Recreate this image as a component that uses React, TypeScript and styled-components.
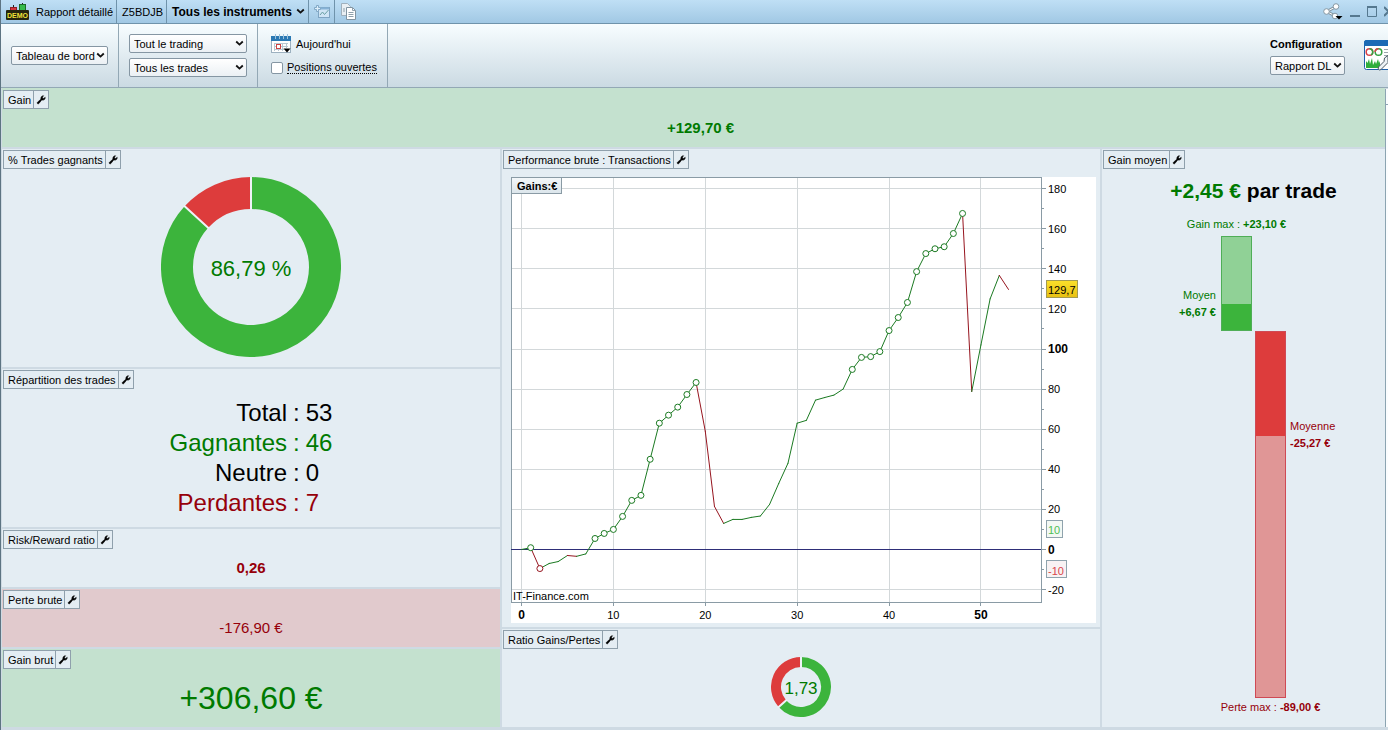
import React, { useLayoutEffect, useRef, useState } from "react";
import styled, { createGlobalStyle, css } from "styled-components";

const color = {
  panel: "#e4edf3",
  gainBg: "#c4e1cf",
  lossBg: "#e1cacd",
  divider: "#cedae3",
  line: "#8fa0ac",
  frame: "#5d7482",
  gain: "#3cb43c",
  gainSoft: "#90d196",
  gainText: "#007a00",
  loss: "#dd3c3c",
  lossSoft: "#e09696",
  lossText: "#96000a",
};

const GlobalStyle = createGlobalStyle`
  * { box-sizing: border-box; }
  body {
    margin: 0;
    font: 11px/16px "Liberation Sans", Arial, sans-serif;
    color: #000;
    background: ${color.divider};
  }
  button, select, input { font: inherit; color: inherit; }
  svg { display: block; flex: none; }
`;

const Page = styled.div`
  display: flex;
  flex-direction: column;
  min-height: 100vh;
  overflow: hidden;
  border-left: 1px solid ${color.frame};
`;

/* ---- title bar ---- */

const TitleBar = styled.header`
  display: flex;
  height: 24px;
  background: linear-gradient(#bfdff5, #a1c8e4);
  border-bottom: 1px solid #6f93ab;
`;

const TitleCell = styled.div<{ $last?: boolean }>`
  display: flex;
  align-items: center;
  gap: 7px;
  padding: 0 3px 0 5px;
  white-space: nowrap;
  border-right: ${(p) => (p.$last ? 0 : 1)}px solid #6f93ab;
`;

const PlainButton = styled.button<{ $bold?: boolean }>`
  display: flex;
  align-items: center;
  gap: 4px;
  padding: 0;
  border: 0;
  background: none;
  font-size: ${(p) => (p.$bold ? 12 : 11)}px;
  font-weight: ${(p) => (p.$bold ? 700 : 400)};
`;

const WindowControls = styled.div`
  display: flex;
  align-items: center;
  gap: 7px;
  margin-left: auto;
`;

/* ---- toolbar ---- */

const Toolbar = styled.div`
  display: flex;
  height: 64px;
  background: linear-gradient(#f7fdff, #cbdae3);
  border-bottom: 1px solid #93a8b5;
`;

const ToolGroup = styled.div`
  display: flex;
  flex-direction: column;
  justify-content: center;
  gap: 5px;
  padding: 0 10px;
  border-right: 1px solid #93a8b5;
`;

const ToolLine = styled.div`
  display: flex;
  align-items: center;
  gap: 4px;
  height: 19px;
  padding-left: 3px;
`;

const ToolEnd = styled.div`
  display: flex;
  align-items: center;
  gap: 19px;
  margin-left: auto;
`;

const ConfigField = styled.div`
  display: flex;
  flex-direction: column;
  gap: 4px;
`;

const FieldLabel = styled.label`
  font-weight: 700;
`;

const SelectShell = styled.div<{ $width: number }>`
  position: relative;
  width: ${(p) => p.$width}px;
  height: 19px;

  svg {
    position: absolute;
    right: 3px;
    top: 6px;
    pointer-events: none;
  }
`;

const SelectBox = styled.select`
  appearance: none;
  display: block;
  width: 100%;
  height: 19px;
  padding: 0 0 0 4px;
  border: 1px solid #8596a3;
  border-radius: 2px;
  background: linear-gradient(#fff, #ebf0f4);
`;

const Tick = styled.input`
  appearance: none;
  width: 12px;
  height: 12px;
  margin: 0;
  border: 1px solid #8596a3;
  border-radius: 2px;
  background: #fff;
`;

const TickLabel = styled.label`
  line-height: 12px;
  border-bottom: 1px dotted #000;
`;

/* ---- dashboard ---- */

const Content = styled.main`
  display: flex;
  flex: 1;
  padding: 0 0 3px 1px;
`;

const Dashboard = styled.div`
  display: flex;
  flex-direction: column;
  flex: 1;
  gap: 2px;
  min-width: 0;
`;

const Columns = styled.div`
  display: grid;
  grid-template-columns: 498fr 598fr 283fr;
  gap: 2px;
  flex: 1;
`;

const Column = styled.div`
  display: flex;
  flex-direction: column;
  gap: 2px;
  min-width: 0;
`;

const PanelBox = styled.section<{ $bg: string; $height: number; $grow?: boolean; $top: number }>`
  display: flex;
  flex-direction: column;
  align-items: flex-start;
  flex: ${(p) => (p.$grow ? "1 0 auto" : "none")};
  min-height: ${(p) => p.$height}px;
  padding: ${(p) => p.$top}px 1px 0;
  background: ${(p) => p.$bg};
`;

const Chip = styled.div`
  display: flex;
  height: 19px;
  border: 1px solid ${color.line};
  background: ${color.panel};
`;

const ChipTitle = styled.h2`
  margin: 0;
  padding: 0 2px 0 4px;
  font: inherit;
  line-height: 18px;
  white-space: nowrap;
`;

const ChipButton = styled.button`
  display: flex;
  align-items: center;
  justify-content: center;
  width: 15px;
  padding: 0;
  border: 0;
  border-left: 1px solid ${color.line};
  background: none;
`;

const PanelBody = styled.div<{ $shift?: number; $fromTop?: boolean }>`
  display: flex;
  flex-direction: column;
  align-items: center;
  justify-content: ${(p) => (p.$fromTop ? "flex-start" : "center")};
  align-self: stretch;
  flex: 1;
  padding-left: ${(p) => p.$shift ?? 0}px;
`;

const Figure = styled.div<{ $size: number; $tone: "gain" | "loss"; $bold?: boolean }>`
  font-size: ${(p) => p.$size}px;
  line-height: 38px;
  font-weight: ${(p) => (p.$bold ? 700 : 400)};
  color: ${(p) => (p.$tone === "gain" ? color.gainText : color.lossText)};
`;

const DonutBox = styled.div`
  padding-bottom: 2px;
`;

const Breakdown = styled.dl`
  display: grid;
  grid-template-columns: auto auto auto;
  column-gap: 6px;
  margin: 0;
  font-size: 24px;
  line-height: 30px;
`;

const toned = css<{ $ink: string }>`
  margin: 0;
  color: ${(p) => p.$ink};
`;
const BreakdownName = styled.dt`
  ${toned}
  text-align: right;
`;
const BreakdownPart = styled.dd`
  ${toned}
`;

const ChartArea = styled.div`
  align-self: stretch;
  margin: 8px 3px 4px 8px;
`;

const AverageTitle = styled.h3`
  margin: 0;
  font-size: 21px;
  line-height: 44px;
  white-space: nowrap;

  span { color: ${color.gainText}; }
`;

const BarGrid = styled.div`
  display: grid;
  grid-template-columns: 1fr 31px 31px 1fr;
  column-gap: 3px;
  align-self: stretch;
`;

const BarCaption = styled.div<{ $col: number; $row: number; $tone: "gain" | "loss" }>`
  grid-area: ${(p) => p.$row} / ${(p) => p.$col};
  display: flex;
  justify-content: center;
  gap: 3px;
  line-height: ${(p) => (p.$tone === "gain" ? 23 : 19)}px;
  white-space: nowrap;
  color: ${(p) => (p.$tone === "gain" ? color.gainText : color.lossText)};
`;

const Bar = styled.div<{ $col: number; $row: number; $soft: string; $edge: string; $end?: boolean }>`
  grid-area: ${(p) => p.$row} / ${(p) => p.$col};
  display: flex;
  flex-direction: column;
  justify-content: ${(p) => (p.$end ? "flex-end" : "flex-start")};
  border: 1px solid ${(p) => p.$edge};
  background: ${(p) => p.$soft};
`;

const BarFill = styled.div<{ $fill: string }>`
  background: ${(p) => p.$fill};
`;

const BarLabel = styled.div<{ $col: number; $row: number; $ink: string }>`
  grid-area: ${(p) => p.$row} / ${(p) => p.$col};
  height: 34px;
  padding: 0 2px 0 1px;
  line-height: 17px;
  text-align: ${(p) => (p.$col === 1 ? "right" : "left")};
  color: ${(p) => p.$ink};

  strong { display: block; }
`;

const ScrollEdge = styled.div`
  flex: none;
  width: 3px;
  margin-top: 1px;
  border-left: 1px solid #8ca4b1;
  background: #fbfdfe;

  &::before {
    content: "";
    display: block;
    height: 15px;
    border-bottom: 1px solid #8ca4b1;
  }
`;

/* ---- icons ---- */

const Chevron = () => (
  <svg width="9" height="7" viewBox="0 0 9 7" aria-hidden="true">
    <path d="M1.2 1.5 4.5 4.6 7.8 1.5" fill="none" stroke="#111" strokeWidth="1.8" />
  </svg>
);

const Wrench = () => (
  <svg width="10" height="10" viewBox="0 0 10 10" aria-hidden="true">
    <path
      d="M7.600.8 6.400 2l.2 1.300 1.300.2L9.200 2.300c.2 1.500-.9 2.900-2.400 2.800-.4 0-.8-.1-1.100-.2L2.900 8.500C2 9.500.6 8.200 1.500 7.200L4.900 4.200C4.500 2.500 5.800.5 7.600.8Z"
      fill="#000"
      stroke="#000"
      strokeWidth=".6"
    />
  </svg>
);

const DemoLogo = () => (
  <svg width="23" height="18" viewBox="0 0 23 18" aria-hidden="true">
    <path d="M7.500 2v6M16.500 0v8" stroke="#222" />
    <rect x="4.500" y="4.500" width="6" height="4" fill="#d3343d" stroke="#8c2027" />
    <rect x="13.500" y="1.500" width="6" height="7" fill="#35bb4a" stroke="#1a6b28" />
    <rect x="0" y="7" width="23" height="10" rx="1" fill="#25250e" />
    <text x="11.500" y="15" textAnchor="middle" fontSize="7" fontWeight="700" fill="#f0e339">
      DEMO
    </text>
  </svg>
);

const AddChartIcon = () => (
  <svg width="17" height="14" viewBox="0 0 17 14" aria-hidden="true">
    <rect x="4.500" y="2.500" width="11" height="10" fill="#cfe5f5" stroke="#7fa5c3" />
    <path d="M5 3.500h10" stroke="#86b2d6" strokeWidth="2" />
    <path d="m6 10 2.500-3 2 2.500L14.500 5" fill="none" stroke="#6ba1a5" />
    <path d="M2.500.500h2v2h2v2h-2v2h-2v-2h-2v-2h2z" fill="#dceefa" stroke="#82a9c6" />
  </svg>
);

const CopyIcon = () => (
  <svg width="17" height="17" viewBox="0 0 17 17" aria-hidden="true">
    <path d="M1.500.500h6l3 3v9h-9z" fill="#e9eff3" stroke="#a0b0bc" />
    <path d="M6.500 4.500h6l3 3v9h-9z" fill="#fff" stroke="#8194a1" />
    <path d="M12.500 4.500v3h3M8.500 9.500h5M8.500 11.500h5M8.500 13.500h5M3 6h2M3 8h2" fill="none" stroke="#8fa0ab" />
  </svg>
);

const ShareIcon = () => (
  <svg width="20" height="17" viewBox="0 0 20 17" aria-hidden="true">
    <path d="M13 3.500 4 8.500l9 5" fill="none" stroke="#8698a4" strokeWidth="3" />
    <path d="M13 3.500 4 8.500l9 5" fill="none" stroke="#fff" strokeWidth="1" />
    <g fill="#fff" stroke="#8698a4">
      <circle cx="13" cy="3.500" r="2.800" />
      <circle cx="3.500" cy="8.500" r="2.800" />
      <circle cx="12" cy="13" r="2.800" />
    </g>
    <path d="M12.500 13h7L16 16.500z" fill="#000" />
  </svg>
);

const CalendarIcon = () => (
  <svg width="21" height="20" viewBox="0 0 21 20" aria-hidden="true">
    <rect x=".5" y="2.500" width="19" height="16" fill="#fff" stroke="#9db1c0" />
    <rect x="0" y="2" width="20" height="5" fill="#2a78b3" />
    <path d="M4.500 0v5M8.500 0v5M12.500 0v5M16.500 0v5" stroke="#9fc4dd" />
    <path d="M3 9.500h14M3 12.500h14M3 15.500h10M3.500 9v8M7.500 9v8M11.500 9v8M15.500 9v5" stroke="#b9c7d1" />
    <rect x="5.500" y="10.500" width="4" height="4" fill="#fff" stroke="#cf4444" />
    <path d="M12.500 14.500h7L16 18.500z" fill="#000" />
  </svg>
);

const ReportIcon = () => (
  <svg width="24" height="31" viewBox="0 0 24 31" aria-hidden="true">
    <path d="M24 .5H2.500Q.5.5.5 2.500v25q0 2 2 2H24" fill="#fff" stroke="#1f5fa8" />
    <path d="M24 0H2.500Q0 0 0 2.500V6h24z" fill="#1b6ab5" />
    <circle cx="5.500" cy="12" r="3.300" fill="none" stroke="#d8434a" strokeWidth="1.500" />
    <path d="M5.500 8.700a3.300 3.300 0 0 1 1.500 6.200" fill="none" stroke="#35a342" strokeWidth="1.500" />
    <circle cx="14.500" cy="12" r="3.300" fill="none" stroke="#35a342" strokeWidth="1.500" />
    <path d="M14.500 8.700a3.300 3.300 0 0 0-3.300 3.300" fill="none" stroke="#d8434a" strokeWidth="1.500" />
    <path d="M20 9.500h4M20 12.500h4M20 15.500h4" stroke="#9aa5ad" />
    <path d="M2 28v-7l1.500 2L5 19l1 5 2-6 1 7 2-4 1 3 2-5 1 4 1-2v7z" fill="#2fae3c" />
    <path d="M14.500 29.500q-1-1.500.5-3l5-5q-1-4 4-6v7l-7 7q-1.500 1-2.500 0z" fill="#eef2f5" stroke="#4a5963" />
  </svg>
);

const Minimise = () => (
  <svg width="10" height="11" viewBox="0 0 10 11" aria-hidden="true">
    <path d="M0 10h10" stroke="#55788f" strokeWidth="2" />
  </svg>
);
const Maximise = () => (
  <svg width="10" height="11" viewBox="0 0 10 11" aria-hidden="true">
    <path d="M.5 1h9v9.500h-9z" fill="none" stroke="#55788f" />
    <path d="M0 1h10" stroke="#55788f" strokeWidth="2" />
  </svg>
);
const CloseMark = () => (
  <svg width="4" height="11" viewBox="0 0 4 11" aria-hidden="true">
    <path d="m0 1 4.500 4.500L0 10" fill="none" stroke="#55788f" strokeWidth="2" />
  </svg>
);

/* ---- building blocks ---- */

function Dropdown({ id, width, text }: { id: string; width: number; text: string }) {
  return (
    <SelectShell $width={width}>
      <SelectBox id={id} aria-label={text}>
        <option>{text}</option>
      </SelectBox>
      <Chevron />
    </SelectShell>
  );
}

type PanelProps = {
  title: string;
  height: number;
  bg?: string;
  grow?: boolean;
  top?: number;
  shift?: number;
  fromTop?: boolean;
  children: React.ReactNode;
};

function Panel({ title, height, bg = color.panel, grow, top = 1, shift, fromTop, children }: PanelProps) {
  return (
    <PanelBox $bg={bg} $height={height} $grow={grow} $top={top}>
      <Chip>
        <ChipTitle>{title}</ChipTitle>
        <ChipButton aria-label={`Configurer ${title}`}>
          <Wrench />
        </ChipButton>
      </Chip>
      <PanelBody $shift={shift} $fromTop={fromTop}>{children}</PanelBody>
    </PanelBox>
  );
}

type DonutProps = { share: number; radius: number; hole: number; label: string; fontSize: number };

function Donut({ share, radius, hole, label, fontSize }: DonutProps) {
  const mid = (radius + hole) / 2;
  const at = (part: number, r: number) => {
    const a = part * Math.PI * 2;
    return `${radius + r * Math.sin(a)} ${radius - r * Math.cos(a)}`;
  };
  const arc = (from: number, to: number) =>
    `M${at(from, mid)}A${mid} ${mid} 0 ${to - from > 0.5 ? 1 : 0} 1 ${at(to, mid)}`;
  return (
    <DonutBox>
      <svg width={radius * 2} height={radius * 2} role="img" aria-label={label}>
        <g fill="none" strokeWidth={radius - hole}>
          <path d={arc(share, 1)} stroke={color.loss} />
          <path d={arc(0, share)} stroke={color.gain} />
        </g>
        <path
          d={`M${at(0, hole - 1)}L${at(0, radius + 1)}M${at(share, hole - 1)}L${at(share, radius + 1)}`}
          stroke="#eef3f7"
          strokeWidth="2"
        />
        <text
          x={radius}
          y={radius + Math.round(fontSize * 0.38) + 1}
          textAnchor="middle"
          fontSize={fontSize}
          fill={color.gainText}
        >
          {label}
        </text>
      </svg>
    </DonutBox>
  );
}

/* Running total in euros after each trade. */
const equity = [
  0, 0.9, -9.5, -7, -6, -3, -3.4, -2.2, 5.5, 8, 10, 16.5, 24.5, 27, 45, 63, 67, 71, 77.3, 83.3, 59, 21.5,
  13, 15, 15, 16, 16.7, 22.5, 33, 43, 63, 64.4, 74.5, 75.8, 77, 80, 89.8, 95.8, 96.2, 98.7, 109.2, 115.7,
  123.2, 138.6, 147.6, 150, 151, 157.6, 167.6, 78.8, 102, 125, 136.7, 129.7,
];
const marked = (i: number) => i === 1 || i === 2 || (i >= 8 && i <= 19) || (i >= 36 && i <= 48);

function EquityChart() {
  const box = useRef<HTMLDivElement>(null);
  const [width, setWidth] = useState(585);
  useLayoutEffect(() => {
    const el = box.current;
    if (!el) return;
    const measure = () => setWidth(Math.round(el.getBoundingClientRect().width));
    measure();
    const watcher = new ResizeObserver(measure);
    watcher.observe(el);
    return () => watcher.disconnect();
  }, []);

  const height = 446;
  const bottom = 425;
  const right = width - 55;
  const x = (i: number) => 10.5 + (i * (right - 43)) / 53;
  const y = (v: number) => 372.5 - v * 2.005;
  const snap = (n: number) => Math.floor(n) + 0.5;
  const ink = (i: number) => (equity[i] < equity[i - 1] ? "#96141e" : "#1b7a22");
  const levels = Array.from({ length: 21 }, (_, i) => i * 10 - 20);

  return (
    <ChartArea ref={box}>
      <svg width={width} height={height} role="img" aria-label="Performance brute">
        <defs>
          <linearGradient id="legend" x2="0" y2="1">
            <stop offset="0" stopColor="#f4f8fa" />
            <stop offset="1" stopColor="#dbe5eb" />
          </linearGradient>
          <linearGradient id="current" x2="0" y2="1">
            <stop offset="0" stopColor="#fbe02a" />
            <stop offset="1" stopColor="#e8c013" />
          </linearGradient>
        </defs>
        <rect width={width} height={height} fill="#fff" />
        <g stroke="#d3d8da" shapeRendering="crispEdges">
          {levels.filter((v) => v % 20 === 0).map((v) => (
            <line key={v} x1="0" x2={right} y1={snap(y(v))} y2={snap(y(v))} />
          ))}
          {[0, 10, 20, 30, 40, 50].map((n) => (
            <line key={n} y1="0" y2={bottom} x1={snap(x(n))} x2={snap(x(n))} />
          ))}
        </g>
        <g stroke="#8a9ba5" shapeRendering="crispEdges" fill="none">
          <rect x=".5" y=".5" width={right} height={bottom} />
          {levels.map((v) => (
            <line key={v} x1={right} x2={right + (v % 20 ? 3 : 5)} y1={snap(y(v))} y2={snap(y(v))} />
          ))}
          {[0, 10, 20, 30, 40, 50].map((n) => (
            <line key={n} y1={bottom} y2={bottom + 4} x1={snap(x(n))} x2={snap(x(n))} />
          ))}
        </g>
        <line x1="0" x2={right} y1="372.5" y2="372.5" stroke="#2e2e78" shapeRendering="crispEdges" />
        {equity.slice(1).map((v, k) => (
          <line key={k} x1={x(k)} y1={y(equity[k])} x2={x(k + 1)} y2={y(v)} stroke={ink(k + 1)} strokeLinecap="round" />
        ))}
        {equity.map((v, i) =>
          marked(i) ? <circle key={i} cx={x(i)} cy={y(v)} r="3" fill="#fff" stroke={ink(i)} /> : null
        )}
        {levels.filter((v) => v % 20 === 0).map((v) => {
          const strong = v === 0 || v === 100;
          return (
            <text key={v} x={right + 7} y={y(v) + 4} fontSize={strong ? 12 : 11} fontWeight={strong ? 700 : 400}>
              {v}
            </text>
          );
        })}
        {[0, 10, 20, 30, 40, 50].map((n) => {
          const strong = n % 50 === 0;
          return (
            <text
              key={n}
              x={x(n)}
              y={bottom + 17}
              textAnchor="middle"
              fontSize={strong ? 12 : 11}
              fontWeight={strong ? 700 : 400}
            >
              {n}
            </text>
          );
        })}
        <g shapeRendering="crispEdges">
          <rect x={right + 5.5} y={snap(y(129.7) - 9)} width="31" height="17" fill="url(#current)" stroke="#a39b52" />
          <rect x={right + 5.5} y={snap(y(10) - 9)} width="16" height="17" fill="#f3f8f4" stroke="#8fa3ad" />
          <rect x={right + 5.5} y={snap(y(-10) - 9)} width="20" height="17" fill="#f8f2f3" stroke="#8fa3ad" />
        </g>
        <text x={right + 7} y={y(129.7) + 5}>129,7</text>
        <text x={right + 7} y={y(10) + 5} fill="#4fbf55">10</text>
        <text x={right + 7} y={y(-10) + 5} fill="#d9464c">-10</text>
        <rect x=".5" y=".5" width="50" height="16" fill="url(#legend)" stroke="#8a9ba5" />
        <text x="6" y="13" fontWeight="700">Gains:€</text>
        <text x="2" y="423">IT-Finance.com</text>
      </svg>
    </ChartArea>
  );
}

const PX_PER_EURO = 4.12;
const px = (euros: number) => Math.round(euros * PX_PER_EURO);
const best = { max: 23.1, average: 6.67 };
const worst = { max: 89, average: 25.27 };

function AverageBars() {
  return (
    <BarGrid>
      <BarCaption $row={1} $col={2} $tone="gain">
        Gain max : <strong>+23,10 €</strong>
      </BarCaption>
      <BarLabel
        $row={2}
        $col={1}
        $ink={color.gainText}
        style={{ marginTop: px(best.max) - px(best.average) - 17 }}
      >
        Moyen <strong>+6,67 €</strong>
      </BarLabel>
      <Bar $row={2} $col={2} $soft={color.gainSoft} $edge="#4fae57" $end style={{ height: px(best.max) }}>
        <BarFill $fill={color.gain} style={{ height: px(best.average) - 1 }} />
      </Bar>
      <Bar $row={3} $col={3} $soft={color.lossSoft} $edge="#cf4a55" style={{ height: px(worst.max) }}>
        <BarFill $fill={color.loss} style={{ height: px(worst.average) }} />
      </Bar>
      <BarLabel $row={3} $col={4} $ink={color.lossText} style={{ marginTop: px(worst.average) - 17 }}>
        Moyenne <strong>-25,27 €</strong>
      </BarLabel>
      <BarCaption $row={4} $col={3} $tone="loss">
        Perte max : <strong>-89,00 €</strong>
      </BarCaption>
    </BarGrid>
  );
}

const breakdown = [
  { name: "Total", count: 53, ink: "#000" },
  { name: "Gagnantes", count: 46, ink: color.gainText },
  { name: "Neutre", count: 0, ink: "#000" },
  { name: "Perdantes", count: 7, ink: color.lossText },
];

export default function App() {
  return (
    <Page>
      <GlobalStyle />
      <TitleBar>
        <TitleCell>
          <DemoLogo />
          Rapport détaillé
        </TitleCell>
        <TitleCell>Z5BDJB</TitleCell>
        <TitleCell>
          <PlainButton $bold>
            Tous les instruments <Chevron />
          </PlainButton>
        </TitleCell>
        <TitleCell>
          <PlainButton aria-label="Ajouter un graphique">
            <AddChartIcon />
          </PlainButton>
        </TitleCell>
        <TitleCell $last>
          <PlainButton aria-label="Copier">
            <CopyIcon />
          </PlainButton>
        </TitleCell>
        <WindowControls>
          <PlainButton aria-label="Partager"><ShareIcon /></PlainButton>
          <PlainButton aria-label="Réduire"><Minimise /></PlainButton>
          <PlainButton aria-label="Agrandir"><Maximise /></PlainButton>
          <PlainButton aria-label="Fermer"><CloseMark /></PlainButton>
        </WindowControls>
      </TitleBar>

      <Toolbar>
        <ToolGroup>
          <Dropdown id="view" width={97} text="Tableau de bord" />
        </ToolGroup>
        <ToolGroup>
          <Dropdown id="trading" width={118} text="Tout le trading" />
          <Dropdown id="trades" width={118} text="Tous les trades" />
        </ToolGroup>
        <ToolGroup>
          <ToolLine>
            <PlainButton>
              <CalendarIcon /> Aujourd'hui
            </PlainButton>
          </ToolLine>
          <ToolLine>
            <Tick type="checkbox" id="open-positions" />
            <TickLabel htmlFor="open-positions">Positions ouvertes</TickLabel>
          </ToolLine>
        </ToolGroup>
        <ToolEnd>
          <ConfigField>
            <FieldLabel htmlFor="configuration">Configuration</FieldLabel>
            <Dropdown id="configuration" width={75} text="Rapport DL" />
          </ConfigField>
          <PlainButton aria-label="Configurer le rapport">
            <ReportIcon />
          </PlainButton>
        </ToolEnd>
      </Toolbar>

      <Content>
        <Dashboard>
          <Panel title="Gain" height={59} bg={color.gainBg} top={2} shift={14}>
            <Figure $size={15} $tone="gain" $bold>+129,70 €</Figure>
          </Panel>
          <Columns>
            <Column>
              <Panel title="% Trades gagnants" height={218}>
                <Donut share={0.8679} radius={90} hole={58} label="86,79 %" fontSize={22} />
              </Panel>
              <Panel title="Répartition des trades" height={158}>
                <Breakdown>
                  {breakdown.map(({ name, count, ink }) => (
                    <React.Fragment key={name}>
                      <BreakdownName $ink={ink}>{name}</BreakdownName>
                      <BreakdownPart $ink={ink}>:</BreakdownPart>
                      <BreakdownPart $ink={ink}>{count}</BreakdownPart>
                    </React.Fragment>
                  ))}
                </Breakdown>
              </Panel>
              <Panel title="Risk/Reward ratio" height={58}>
                <Figure $size={15} $tone="loss" $bold>0,26</Figure>
              </Panel>
              <Panel title="Perte brute" height={58} bg={color.lossBg}>
                <Figure $size={15} $tone="loss">-176,90 €</Figure>
              </Panel>
              <Panel title="Gain brut" height={78} bg={color.gainBg} grow>
                <Figure $size={32} $tone="gain">+306,60 €</Figure>
              </Panel>
            </Column>
            <Column>
              <Panel title="Performance brute : Transactions" height={478}>
                <EquityChart />
              </Panel>
              <Panel title="Ratio Gains/Pertes" height={98} grow>
                <Donut share={0.634} radius={30} hole={20} label="1,73" fontSize={17} />
              </Panel>
            </Column>
            <Column>
              <Panel title="Gain moyen" height={578} grow shift={20} fromTop>
                <AverageTitle>
                  <span>+2,45 €</span> par trade
                </AverageTitle>
                <AverageBars />
              </Panel>
            </Column>
          </Columns>
        </Dashboard>
        <ScrollEdge />
      </Content>
    </Page>
  );
}
